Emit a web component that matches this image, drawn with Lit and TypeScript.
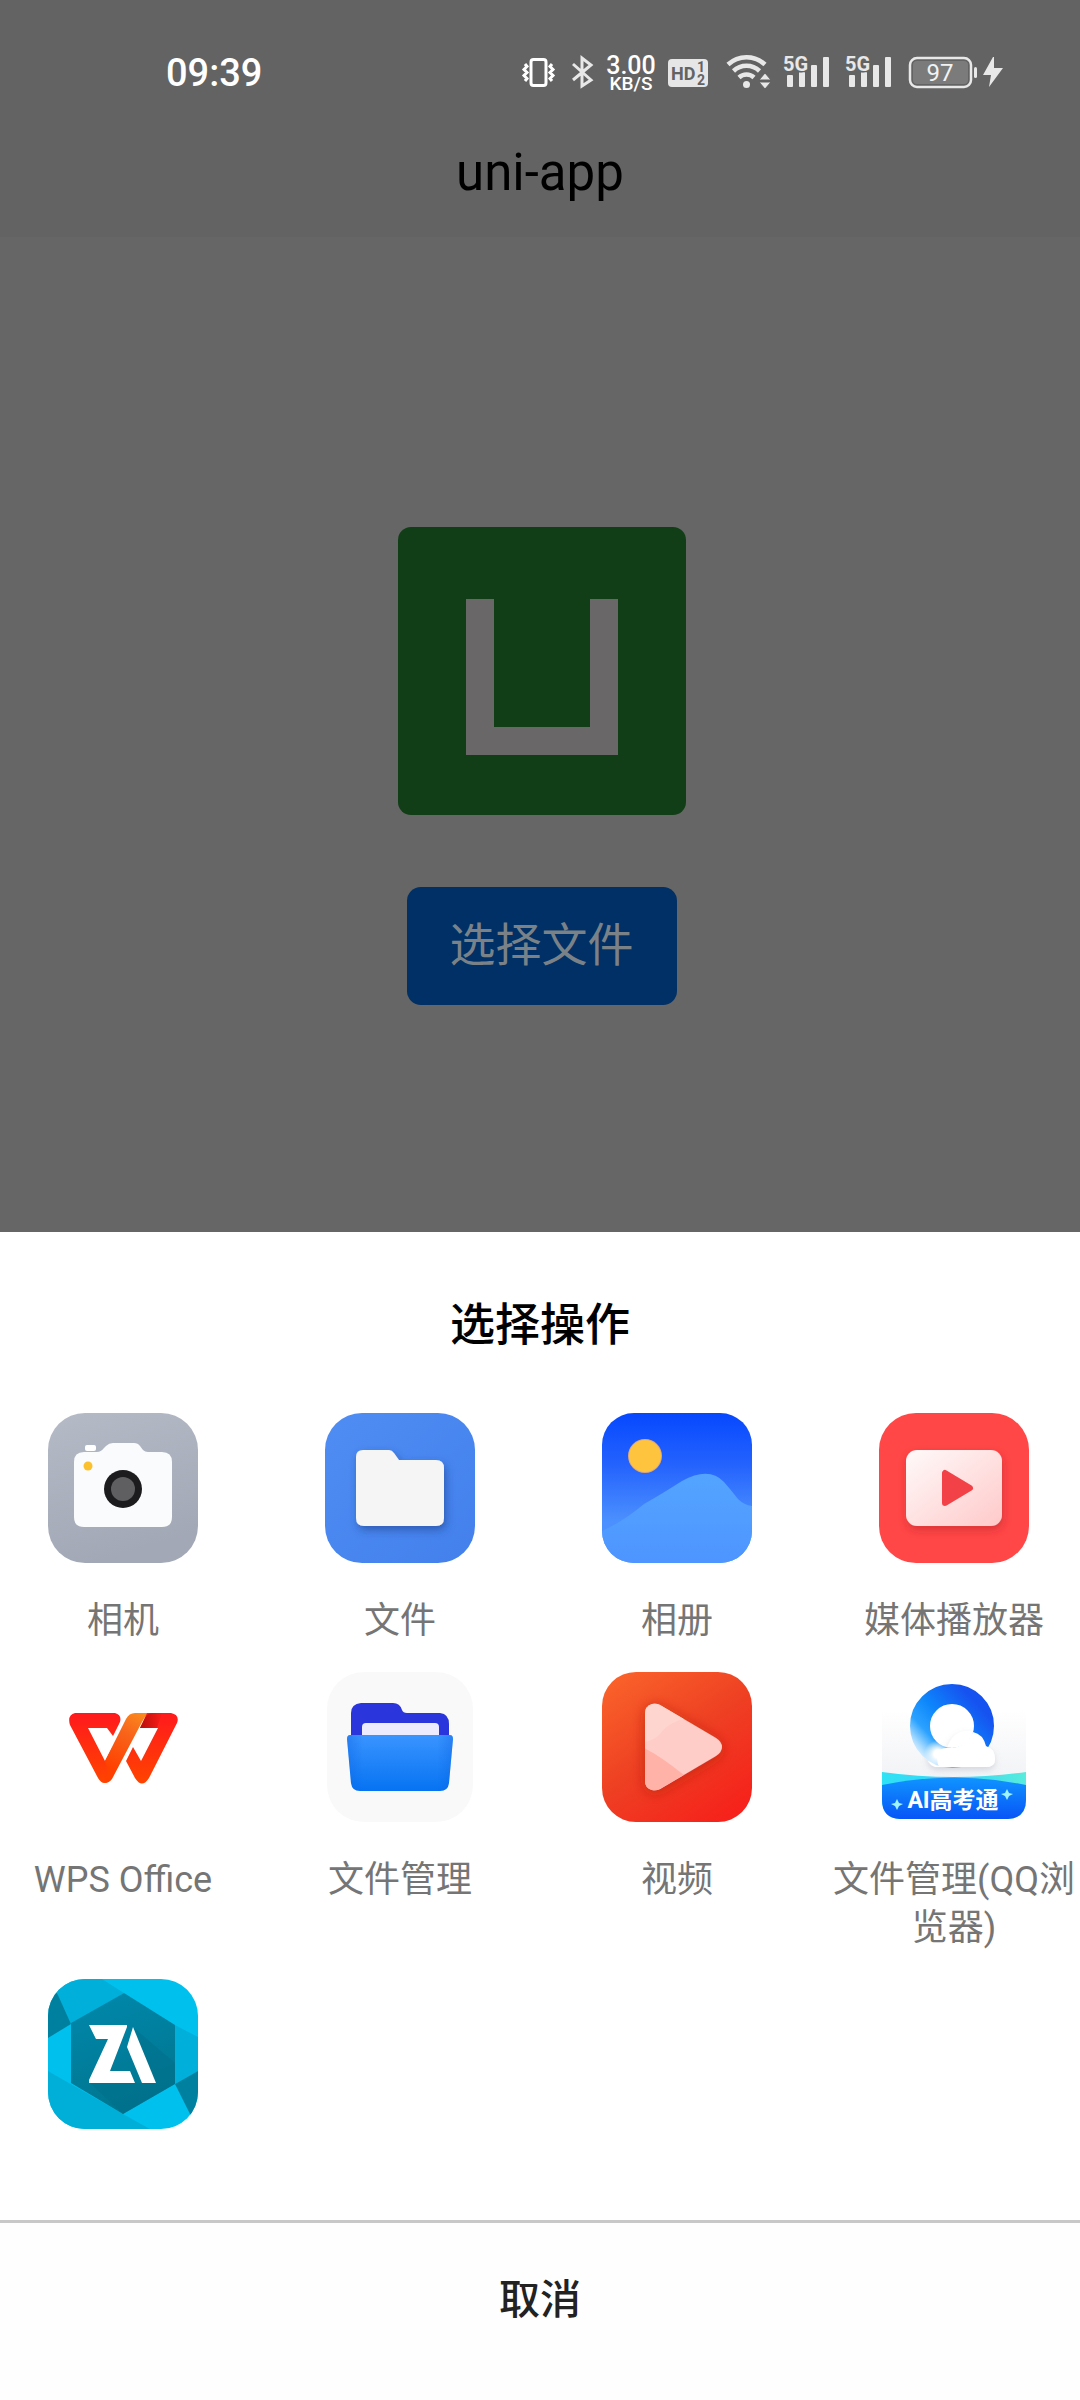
import { LitElement, html, svg, css, nothing, type TemplateResult } from "lit";
import { customElement } from "lit/decorators.js";

/* ---------- Launcher icons, each on a 150 x 150 canvas ---------- */

const cameraIcon = html`<svg class="icon" viewBox="0 0 150 150" aria-hidden="true">
  <defs>
    <linearGradient id="cam" x1="0" y1="0" x2="0.3" y2="1">
      <stop offset="0" stop-color="#b5bac7" /><stop offset="1" stop-color="#a2a8b5" />
    </linearGradient>
  </defs>
  <rect width="150" height="150" rx="37" fill="url(#cam)" />
  <rect x="37" y="32" width="11" height="6" rx="2" fill="#fff" />
  <path d="M36 39H49Q53 39 56 35L58 33Q61 30 65 30H86Q90 30 92 33L95 37Q97 39 100 39H114Q124 39 124 49V104Q124 114 114 114H36Q26 114 26 104V49Q26 39 36 39Z" fill="#fafbfc" />
  <circle cx="75" cy="76" r="19" fill="#1c1c1e" />
  <circle cx="75" cy="76" r="12" fill="#5f5f61" />
  <circle cx="40" cy="53" r="4.500" fill="#fbc02d" />
</svg>`;

const filesIcon = html`<svg class="icon" viewBox="0 0 150 150" aria-hidden="true">
  <defs>
    <linearGradient id="fil" x1="0" y1="0" x2="1" y2="1">
      <stop offset="0" stop-color="#4f8df3" /><stop offset="1" stop-color="#4380ec" />
    </linearGradient>
    <filter id="filShadow" x="-20%" y="-20%" width="150%" height="150%">
      <feDropShadow dx="2" dy="4" stdDeviation="4" flood-color="#1a3f8c" flood-opacity="0.6" />
    </filter>
  </defs>
  <rect width="150" height="150" rx="37" fill="url(#fil)" />
  <path d="M38 37H64Q67 37 69 40L74 47H111Q119 47 119 55V105Q119 113 111 113H39Q31 113 31 105V44Q31 37 38 37Z" fill="#f5f5f5" filter="url(#filShadow)" />
</svg>`;

const galleryIcon = html`<svg class="icon" viewBox="0 0 150 150" aria-hidden="true">
  <defs>
    <linearGradient id="galSky" x1="0" y1="0" x2="0" y2="1">
      <stop offset="0" stop-color="#0648ff" /><stop offset="0.35" stop-color="#2563fd" />
      <stop offset="0.72" stop-color="#4b90fe" /><stop offset="1" stop-color="#4c94ff" />
    </linearGradient>
    <linearGradient id="galHill" x1="0" y1="0" x2="0" y2="1">
      <stop offset="0" stop-color="#53a4ff" /><stop offset="1" stop-color="#4e95ff" />
    </linearGradient>
    <clipPath id="galClip"><rect width="150" height="150" rx="32" /></clipPath>
  </defs>
  <g clip-path="url(#galClip)">
    <rect width="150" height="150" fill="url(#galSky)" />
    <path d="M0 118Q22 108 42 91Q58 82 80 68Q107 53 122 69Q129 77 136 86Q142 92 150 93V150H0Z" fill="url(#galHill)" />
    <circle cx="43" cy="43" r="17" fill="#dda77c" />
    <circle cx="43" cy="43" r="16" fill="#fec43e" />
  </g>
</svg>`;

const mediaIcon = html`<svg class="icon" viewBox="0 0 150 150" aria-hidden="true">
  <defs>
    <linearGradient id="med" x1="0" y1="0" x2="1" y2="1">
      <stop offset="0" stop-color="#fffafa" /><stop offset="1" stop-color="#ffc9c9" />
    </linearGradient>
    <filter id="medShadow" x="-20%" y="-20%" width="140%" height="150%">
      <feDropShadow dx="1" dy="4" stdDeviation="4" flood-color="#b81f28" flood-opacity="0.5" />
    </filter>
  </defs>
  <rect width="150" height="150" rx="37" fill="#ff4747" />
  <rect x="27" y="37" width="96" height="76" rx="11" fill="url(#med)" filter="url(#medShadow)" />
  <path d="M66 60V90L91 75Z" fill="#f24248" stroke="#f24248" stroke-width="6" stroke-linejoin="round" />
</svg>`;

const wpsIcon = html`<svg class="icon" viewBox="0 0 150 150" aria-hidden="true">
  <defs>
    <linearGradient id="wps" x1="0" y1="0" x2="0" y2="1">
      <stop offset="0" stop-color="#ff1a1c" /><stop offset="1" stop-color="#ff4400" />
    </linearGradient>
    <linearGradient id="wpsBand" gradientUnits="userSpaceOnUse" x1="95" y1="41" x2="66" y2="98">
      <stop offset="0" stop-color="#fb8a1e" /><stop offset="0.4" stop-color="#f8641a" /><stop offset="1" stop-color="#ff4000" />
    </linearGradient>
    <linearGradient id="wpsFold" gradientUnits="userSpaceOnUse" x1="92" y1="0" x2="114" y2="0">
      <stop offset="0" stop-color="#b80f0a" /><stop offset="1" stop-color="#fb1c18" />
    </linearGradient>
  </defs>
  <path d="M27 41H67Q74 43 72 50L65 64L59 56H40L57 89L64 76L70 86L63 106Q56 116 50 106L22 53Q19 43 27 41Z" fill="url(#wps)" />
  <path d="M57 89L78 47Q81 41 87 41H101Q97 44 94 50L64 107Q61 111 57 111Q61 100 57 89Z" fill="url(#wpsBand)" />
  <path d="M85 75L93 89L110 56H92L99 41H123Q132 43 129 51L101 106Q94 117 87 106L78 89Z" fill="url(#wps)" />
  <path d="M92 56L96 48Q99 41 104 41H114L109 56Z" fill="url(#wpsFold)" />
</svg>`;

const fileManagerIcon = html`<svg class="icon" viewBox="0 0 150 150" aria-hidden="true">
  <defs>
    <linearGradient id="fmFront" x1="0" y1="0" x2="0" y2="1">
      <stop offset="0" stop-color="#3a94ff" /><stop offset="1" stop-color="#0673f2" />
    </linearGradient>
    <linearGradient id="fmEdge" x1="0" y1="0" x2="1" y2="0">
      <stop offset="0" stop-color="#0a5fe0" stop-opacity="0.35" /><stop offset="0.15" stop-color="#0a5fe0" stop-opacity="0" />
      <stop offset="0.85" stop-color="#0a5fe0" stop-opacity="0" /><stop offset="1" stop-color="#0a5fe0" stop-opacity="0.35" />
    </linearGradient>
  </defs>
  <rect x="2" width="146" height="150" rx="37" fill="#f9f9fa" />
  <path d="M36 31H68Q75 31 77 38Q78 41 82 41H115Q124 42 124 52V72H26V41Q26 32 36 31Z" fill="#2a35db" />
  <rect x="37" y="51" width="77" height="20" rx="4" fill="#ebebfd" />
  <path d="M25 63H125Q128 63 128 67L124 111Q123 119 115 119H35Q27 119 26 111L22 67Q22 63 25 63Z" fill="url(#fmFront)" />
  <path d="M25 63H125Q128 63 128 67L124 111Q123 119 115 119H35Q27 119 26 111L22 67Q22 63 25 63Z" fill="url(#fmEdge)" />
</svg>`;

const videoIcon = html`<svg class="icon" viewBox="0 0 150 150" aria-hidden="true">
  <defs>
    <linearGradient id="vid" x1="0.1" y1="0" x2="0.8" y2="1">
      <stop offset="0" stop-color="#fa632a" /><stop offset="0.5" stop-color="#ee4023" /><stop offset="1" stop-color="#f6221b" />
    </linearGradient>
    <filter id="vidShadow" x="-30%" y="-20%" width="160%" height="150%">
      <feDropShadow dx="0" dy="2" stdDeviation="7" flood-color="#a82410" flood-opacity="0.6" />
    </filter>
    <clipPath id="vidClip">
      <path d="M43 42Q43 34 50 32Q54 31 58 33L114 66Q120 70 120 75Q120 80 114 84L58 117Q54 119 50 118Q43 116 43 109Z" />
    </clipPath>
  </defs>
  <rect width="150" height="150" rx="34" fill="url(#vid)" />
  <path d="M43 42Q43 34 50 32Q54 31 58 33L114 66Q120 70 120 75Q120 80 114 84L58 117Q54 119 50 118Q43 116 43 109Z" fill="#ffcdc7" filter="url(#vidShadow)" />
  <g clip-path="url(#vidClip)">
    <path d="M40 30H66L88 45Q66 50 58 62Q50 70 40 70Z" fill="#ffd5d0" />
    <path d="M40 75Q56 82 82 103L60 125H40Z" fill="#ffb2a8" />
  </g>
</svg>`;

const qqIcon = html`<svg class="icon" viewBox="0 0 150 150" aria-hidden="true">
  <defs>
    <linearGradient id="qqTile" x1="0" y1="0" x2="0" y2="1">
      <stop offset="0.25" stop-color="#fff" /><stop offset="0.7" stop-color="#f2f3f6" />
    </linearGradient>
    <linearGradient id="qqRing" gradientUnits="userSpaceOnUse" x1="40" y1="98" x2="104" y2="38">
      <stop offset="0.08" stop-color="#f6fbff" /><stop offset="0.2" stop-color="#a8dbff" /><stop offset="0.36" stop-color="#2ba2ff" />
      <stop offset="0.6" stop-color="#0d86fb" /><stop offset="1" stop-color="#1652f0" />
    </linearGradient>
    <linearGradient id="qqBand" x1="0" y1="0" x2="0" y2="1">
      <stop offset="0" stop-color="#1094ff" /><stop offset="1" stop-color="#0750f6" />
    </linearGradient>
    <linearGradient id="qqMint" x1="0" y1="0" x2="1" y2="0">
      <stop offset="0" stop-color="#2fe2f4" /><stop offset="0.5" stop-color="#39d3f6" /><stop offset="1" stop-color="#57ecdc" />
    </linearGradient>
    <radialGradient id="qqFade"><stop offset="0.3" stop-color="#fff" /><stop offset="1" stop-color="#fff" stop-opacity="0" /></radialGradient>
    <filter id="qqShadow" x="-20%" y="-20%" width="140%" height="160%">
      <feDropShadow dx="0" dy="3" stdDeviation="3" flood-color="#8890a5" flood-opacity="0.3" />
    </filter>
    <clipPath id="qqClip"><path d="M3 0H147V128Q147 146 129 147H21Q3 146 3 128Z" /></clipPath>
  </defs>
  <g clip-path="url(#qqClip)">
    <rect width="150" height="150" fill="url(#qqTile)" />
    <circle cx="73" cy="54" r="24" fill="#fff" />
    <path d="M56 95Q47 92 48 80Q55 72 68 76Q74 58 90 59Q104 60 107 74Q116 77 116 87Q116 95 107 95Z" fill="#fff" filter="url(#qqShadow)" />
    <circle cx="73" cy="54" r="32" fill="none" stroke="url(#qqRing)" stroke-width="20" />
    <path d="M60 95Q56 86 60 78Q66 75 73 76Q83 75 90 67L94 60Q104 62 107 74Q116 77 116 87Q116 95 107 95Z" fill="#fff" />
    <circle cx="59" cy="82" r="14" fill="url(#qqFade)" />
    <path d="M3 100Q75 110 147 100V150H3Z" fill="url(#qqMint)" />
    <path d="M3 113Q75 98 147 113V150H3Z" fill="url(#qqBand)" />
  </g>
  <path d="M18 127L20 131L24 132L20 134L18 138L16 134L12 132L16 131Z M128 117L130 121L134 122L130 124L128 128L126 124L122 122L126 121Z" fill="#9ff4ff" />
  <text class="ribbon" x="74" y="136" text-anchor="middle">AI高考通</text>
</svg>`;

const archiverIcon = html`<svg class="icon" viewBox="0 0 150 150" aria-hidden="true">
  <defs>
    <linearGradient id="zaHex" x1="0" y1="0" x2="0.3" y2="1">
      <stop offset="0" stop-color="#0089ad" /><stop offset="1" stop-color="#007690" />
    </linearGradient>
    <clipPath id="zaClip"><rect width="150" height="150" rx="37" /></clipPath>
  </defs>
  <g clip-path="url(#zaClip)">
    <rect width="150" height="150" fill="#00c1ee" />
    <path d="M0 0H54L76 14L23 45L10 16Z" fill="#00b0da" />
    <path d="M0 0L10 16L23 45L0 59Z" fill="#00809f" />
    <path d="M127 46L150 58V92L127 105Z" fill="#00b0da" />
    <path d="M127 105L150 92V150L142 135Z" fill="#00809f" />
    <path d="M0 92L75 135L102 150H0Z" fill="#00afd8" />
    <path d="M76 14L127 46V105L75 135L23 104V44Z" fill="url(#zaHex)" />
    <path d="M85 48L127 84V105L75 135L42 104L87 104L94 104Z" fill="#006c86" opacity="0.4" />
    <path d="M41 46H79V48L62 92H82L87 104H41V101L60 60H48Z" fill="#fff" />
    <path d="M85 48L108 104H94L79 68Z" fill="#fff" />
  </g>
</svg>`;

interface Target {
  name: string;
  icon: TemplateResult;
  hint?: string;
}

const targets: Target[] = [
  { name: "相机", icon: cameraIcon },
  { name: "文件", icon: filesIcon },
  { name: "相册", icon: galleryIcon },
  { name: "媒体播放器", icon: mediaIcon },
  { name: "WPS Office", icon: wpsIcon },
  { name: "文件管理", icon: fileManagerIcon },
  { name: "视频", icon: videoIcon },
  { name: "文件管理(QQ浏览器)", icon: qqIcon },
  { name: "", icon: archiverIcon, hint: "ZArchiver" },
];

/* ---------- Status bar ---------- */

const bars = svg`
  <rect x="4" y="21" width="6" height="12" rx="1" />
  <rect x="16" y="18" width="6" height="15" rx="1" />
  <rect x="28" y="11" width="6" height="22" rx="1" />
  <rect x="40" y="3" width="6" height="30" rx="1" />`;

const signalIcon = html`<svg width="50" height="44" viewBox="0 -4 50 44" fill="#e8e8e8" aria-hidden="true">
  ${bars}
  <text class="tech" x="0" y="17">5G</text>
</svg>`;

@customElement("status-bar")
export class StatusBar extends LitElement {
  static styles = css`
    :host {
      display: flex;
      align-items: center;
      justify-content: space-between;
      padding: 50px 77px 0 166px;
      color: #fff;
      font-family: Roboto, "Noto Sans CJK SC", sans-serif;
    }
    .time {
      padding-top: 2px;
      font-size: 38px;
      font-weight: 500;
      line-height: 36px;
    }
    .tray {
      display: flex;
      align-items: center;
      gap: 12px;
    }
    .tray svg {
      display: block;
      overflow: visible;
    }
    .speed {
      display: flex;
      flex-direction: column;
      align-items: center;
      width: 50px;
      padding-top: 6px;
      font-weight: 500;
      line-height: 18px;
    }
    .rate {
      font-size: 25px;
    }
    .unit {
      font-size: 19px;
    }
    .tech {
      font-size: 20px;
      font-weight: 700;
      stroke: #636363;
      stroke-width: 3px;
      paint-order: stroke;
    }
    .hd {
      font-size: 18px;
      font-weight: 700;
    }
    .sim {
      font-size: 14px;
      font-weight: 700;
    }
    .level {
      font-size: 24px;
    }
  `;

  render() {
    return html`
      <span class="time">09:39</span>
      <div class="tray">
        <svg width="34" height="36" viewBox="0 0 34 36" fill="none" stroke="#fff" stroke-width="3" aria-hidden="true">
          <rect x="9" y="5.500" width="15" height="26" rx="2.500" />
          <path d="M3 10L5 12.500L2 15.500L5 18.500L2 21.500L5 24.500L3 27M30 10L28 12.500L31 15.500L28 18.500L31 21.500L28 24.500L30 27" />
        </svg>
        <svg width="26" height="36" viewBox="0 0 26 36" fill="none" stroke="#e8e8e8" stroke-width="3" aria-hidden="true">
          <path d="M5 10L23 26L14 32V4L23 11L5 26" />
        </svg>
        <div class="speed"><span class="rate">3.00</span><span class="unit">KB/S</span></div>
        <svg width="40" height="36" viewBox="0 0 40 36" aria-hidden="true">
          <rect y="5" width="40" height="28" rx="4" fill="#e6e6e6" />
          <g fill="#636363">
            <text class="hd" x="3" y="26">HD</text>
            <text class="sim" x="29" y="18">1</text>
            <text class="sim" x="29" y="31">2</text>
          </g>
        </svg>
        <svg width="51" height="36" viewBox="0 0 51 36" fill="none" stroke="#e8e8e8" stroke-width="4.500" aria-hidden="true">
          <path d="M8 10.500A27 27 0 0 1 45 10.500M13.500 17A19 19 0 0 1 39.500 17M19 23.500A11 11 0 0 1 34 23.500" />
          <circle cx="26.500" cy="30.500" r="3.500" fill="#e8e8e8" stroke="none" />
          <path d="M45 19L51 26H39ZM45 35L51 28H39Z" fill="#e8e8e8" stroke="#636363" stroke-width="1" />
        </svg>
        ${signalIcon} ${signalIcon}
        <svg width="96" height="36" viewBox="0 0 96 36" aria-hidden="true">
          <rect x="3" y="4" width="61" height="29" rx="7" fill="#636363" stroke="#e8e8e8" stroke-width="2.500" />
          <rect x="6" y="7" width="55" height="23" rx="4" fill="#7b7b7b" />
          <rect x="67" y="13" width="3" height="11" rx="1.500" fill="#e8e8e8" />
          <text class="level" x="33" y="27" text-anchor="middle" fill="#f2f2f2">97</text>
          <path d="M86 3L76 21H84L82 33L96 14H87L87 3Z" fill="#e8e8e8" />
        </svg>
      </div>
    `;
  }
}

/* ---------- Screen ---------- */

@customElement("app-root")
export class AppRoot extends LitElement {
  static styles = css`
    :host {
      display: flex;
      flex-direction: column;
      min-height: 100vh;
      background: #666;
      color: #000;
      font-family: Roboto, "Noto Sans CJK SC", sans-serif;
    }
    button {
      margin: 0;
      border: 0;
      font-family: inherit;
      cursor: pointer;
    }
    .top {
      background: #636363;
    }
    .page-title {
      margin: 0;
      padding: 49px 0 34px;
      font-size: 51px;
      font-weight: 400;
      line-height: 60px;
      text-align: center;
    }
    .page {
      flex: 1;
      display: flex;
      flex-direction: column;
      align-items: center;
      gap: 72px;
      padding: 290px 0 72px 3px;
    }
    .logo {
      display: block;
      width: 288px;
      height: 288px;
    }
    .pick {
      padding: 28px 43px 30px;
      border-radius: 14px;
      background: #003065;
      color: #7a8288;
      font-size: 46px;
      line-height: 60px;
    }
    .sheet {
      background: #fff;
    }
    .sheet-title {
      margin: 0;
      padding: 64px 0 57px;
      font-size: 45px;
      font-weight: 500;
      line-height: 60px;
      text-align: center;
    }
    .targets {
      display: grid;
      grid-template-columns: repeat(4, minmax(0, 1fr));
      gap: 27px 31px;
      margin: 0;
      padding: 0 3px 9px 0;
      list-style: none;
    }
    .target {
      display: flex;
      flex-direction: column;
      align-items: center;
      gap: 34px;
      width: 100%;
      padding: 0;
      background: none;
      color: #757575;
      font-size: 36px;
      line-height: 48px;
    }
    .icon {
      display: block;
      width: 150px;
      height: 150px;
    }
    .label {
      min-height: 48px;
      word-break: break-all;
    }
    .ribbon {
      fill: #fff;
      font-size: 23px;
      font-weight: 700;
    }
    .cancel {
      display: block;
      width: 100%;
      padding: 47px 0 70px;
      border-top: 3px solid #c8c8c8;
      background: #fefefe;
      color: #222;
      font-size: 41px;
      font-weight: 500;
      line-height: 60px;
    }
  `;

  render() {
    return html`
      <header class="top">
        <status-bar></status-bar>
        <h1 class="page-title">uni-app</h1>
      </header>
      <main class="page">
        <svg class="logo" viewBox="0 0 288 288" role="img" aria-label="uni-app">
          <rect width="288" height="288" rx="13" fill="#123e17" />
          <path d="M68 72H96V200H192V72H220V228H68Z" fill="#696768" />
        </svg>
        <button class="pick" type="button">选择文件</button>
      </main>
      <section class="sheet" role="dialog" aria-labelledby="sheet-title">
        <h2 class="sheet-title" id="sheet-title">选择操作</h2>
        <ul class="targets">
          ${targets.map(
            (t) => html`<li>
              <button class="target" type="button" aria-label=${t.hint ?? nothing}>
                ${t.icon}<span class="label">${t.name}</span>
              </button>
            </li>`
          )}
        </ul>
        <button class="cancel" type="button">取消</button>
      </section>
    `;
  }
}
